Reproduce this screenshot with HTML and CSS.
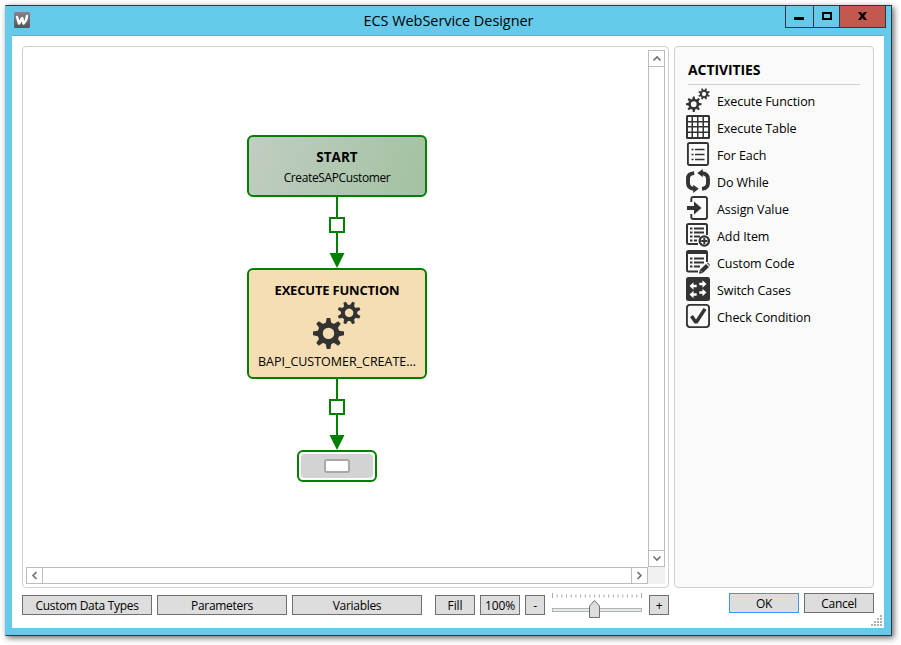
FILE: index.html
```
<!DOCTYPE html>
<html lang="en">
<head>
<meta charset="utf-8">
<title>ECS WebService Designer</title>
<link rel="stylesheet" href="styles.css">
</head>
<body>
<svg class="defs" width="0" height="0" aria-hidden="true">
  <defs>
    <path id="tooth" d="M-3-9.5L-1.8-15.5H1.8L3-9.5Z"/>
    <g id="gear">
      <circle r="8.3" fill="none" stroke="#333" stroke-width="5.2"/>
      <use href="#tooth"/><use href="#tooth" transform="rotate(45)"/><use href="#tooth" transform="rotate(90)"/><use href="#tooth" transform="rotate(135)"/>
      <use href="#tooth" transform="rotate(180)"/><use href="#tooth" transform="rotate(225)"/><use href="#tooth" transform="rotate(270)"/><use href="#tooth" transform="rotate(315)"/>
    </g>
    <symbol id="gears" viewBox="0 0 48 48">
      <g fill="#333"><use href="#gear" transform="translate(15.5 32.4)"/><use href="#gear" transform="translate(36.1 11.9) rotate(22.5) scale(.75)"/></g>
    </symbol>
    <path id="arrow" d="M0 0L-4-3.700V-1.200H-7.200V1.200H-4V3.700Z"/>
  </defs>
</svg>
<div class="window">
  <header class="titlebar">
    <svg class="logo" width="16" height="16" viewBox="0 0 16 16"><defs><linearGradient id="lg" x1="0" y1="0" x2="0" y2="1"><stop offset="0" stop-color="#858589"/><stop offset="1" stop-color="#555559"/></linearGradient></defs><rect width="16" height="16" rx="1.5" fill="url(#lg)"/><path d="M3 5L5 11.500L8.200 6L9.500 11.500Q12.500 9 13 4" fill="none" stroke="#fff" stroke-width="2.5" stroke-linejoin="round" stroke-linecap="round"/></svg>
    <h1>ECS WebService Designer</h1>
    <div class="caption">
      <span class="cap min"><svg width="27" height="20"><path d="M8 11h10v3H8z"/></svg></span>
      <span class="cap max"><svg width="25" height="20"><rect x="9" y="7" width="8" height="6" fill="none" stroke="#000" stroke-width="2"/></svg></span>
      <span class="cap close"><svg width="45" height="20"><path d="M18 6h3l1.500 2.300L24 6h3l-3 4 3 4h-3l-1.500-2.300L21 14h-3l3-4z"/></svg></span>
    </div>
  </header>
  <main class="client">
    <div class="panels">
      <section class="designer">
        <div class="flow">
          <div class="node start"><b>START</b><span>CreateSAPCustomer</span></div>
          <svg class="link" width="16" height="71" viewBox="0 0 16 71"><path d="M8 0V57" stroke="#008000" stroke-width="2"/><rect x="1" y="21" width="14" height="14" fill="#fff" stroke="#008000" stroke-width="2"/><path d="M.5 56h15L8 71z" fill="#008000"/></svg>
          <div class="node exec"><b>EXECUTE FUNCTION</b><svg width="48" height="48"><use href="#gears"/></svg><span>BAPI_CUSTOMER_CREATE...</span></div>
          <svg class="link" width="16" height="71" viewBox="0 0 16 71"><path d="M8 0V57" stroke="#008000" stroke-width="2"/><rect x="1" y="21" width="14" height="14" fill="#fff" stroke="#008000" stroke-width="2"/><path d="M.5 56h15L8 71z" fill="#008000"/></svg>
          <div class="node end"><div><i></i></div></div>
        </div>
        <div class="vbar"><span><svg width="15" height="15"><path d="M4.500 9.500L8 6L11.500 9.500"/></svg></span><span><svg width="15" height="15"><path d="M4.500 5.500L8 9L11.500 5.500"/></svg></span></div>
        <div class="hbar"><span><svg width="15" height="15"><path d="M9.500 4L6 7.500L9.500 11"/></svg></span><span><svg width="15" height="15"><path d="M5.500 4L9 7.500L5.500 11"/></svg></span></div>
        <div class="corner"></div>
      </section>
      <aside class="activities">
        <h2>ACTIVITIES</h2>
        <ul>
          <li><svg viewBox="0 0 48 48"><use href="#gears"/></svg><span>Execute Function</span></li>
          <li><svg viewBox="0 0 24 24"><rect width="24" height="24" rx="1.500" fill="#333"/><path fill="#fff" d="M2 2h3.500v4H2zM7 2h4v4H7zM12.500 2h4v4h-4zM18 2h4v4h-4zM2 7.500h3.500v3.500H2zM7 7.500h4v3.500H7zM12.500 7.500h4v3.500h-4zM18 7.500h4v3.500h-4zM2 12.500h3.500v4H2zM7 12.500h4v4H7zM12.500 12.500h4v4h-4zM18 12.500h4v4h-4zM2 18h3.500v4H2zM7 18h4v4H7zM12.500 18h4v4h-4zM18 18h4v4h-4z"/></svg><span>Execute Table</span></li>
          <li><svg viewBox="0 0 24 24" fill="none" stroke="#333" stroke-width="1.900"><rect x="1.900" y="1" width="20.200" height="22" rx="1.500"/><path d="M5.500 7.500h2M9 7.500h9.500M5.500 12.500h2M9 12.500h9.500M5.500 17.500h2M9 17.500h9.500" stroke-width="1.700"/></svg><span>For Each</span></li>
          <li><svg viewBox="0 0 24 24"><path d="M8.200 4.100Q2 4.500 2 9.500V14Q2 19.200 8 19.800M16 4.100Q22 4.800 22 10V14Q22 19.200 16 19.900" fill="none" stroke="#333" stroke-width="3.900"/><path d="M16.800 0V8.300L11.300 4.100zM7.200 15.700V24L12.700 19.800z" fill="#333"/></svg><span>Do While</span></li>
          <li><svg viewBox="0 0 24 24"><path d="M5.300 6V3Q5.300 1 7.300 1H19Q21 1 21 3V21Q21 23 19 23H7.300Q5.300 23 5.300 21V18" fill="none" stroke="#333" stroke-width="1.900"/><path d="M1 9.900h7V5.500l7.500 6.500L8 18.500v-4.400H1z" fill="#333"/></svg><span>Assign Value</span></li>
          <li><svg viewBox="0 0 24 24"><path d="M12 21H2.500Q1 21 1 19.500V2.500Q1 1 2.500 1H19.500Q21 1 21 2.500V12" fill="none" stroke="#333" stroke-width="2"/><path d="M4 5.500h2.500M8 5.500h10M4 9.500h2.500M8 9.500h10M4 13.500h2.500M8 13.500h6M4 17.500h2.500M8 17.500h3" stroke="#333" stroke-width="1.900"/><circle cx="18.300" cy="18" r="4.600" fill="#fafafa" stroke="#333" stroke-width="2.400"/><path d="M15.300 18h6M18.300 15v6" stroke="#333" stroke-width="2"/></svg><span>Add Item</span></li>
          <li><svg viewBox="0 0 24 24"><path d="M12 21.500H2.500Q1 21.500 1 20V2.500Q1 1 2.500 1H19.500Q21 1 21 2.500V12" fill="none" stroke="#333" stroke-width="2"/><path d="M1 1h20v3H1z" fill="#333"/><path d="M4 8.500h2.500M8 8.500h10M4 12.500h2.500M8 12.500h10M4 16.500h2.500M8 16.500h6" stroke="#333" stroke-width="1.800"/><path d="M13 23.700l.7-3.700L20 14l3 3-6.300 6z" fill="#333"/><path d="M20.800 13.200l1-1 3 3-1 1zM14.200 20.500l2 2" fill="#333" stroke="#fafafa" stroke-width=".6"/></svg><span>Custom Code</span></li>
          <li><svg viewBox="0 0 24 24"><rect width="24" height="24" rx="2.500" fill="#333"/><g fill="#fff"><use href="#arrow" transform="translate(3.500 9) scale(-1 1)"/><use href="#arrow" transform="translate(20.500 7)"/><use href="#arrow" transform="translate(3.500 17.500) scale(-1 1)"/><use href="#arrow" transform="translate(20.500 15.500)"/></g></svg><span>Switch Cases</span></li>
          <li><svg viewBox="0 0 24 24"><rect x=".9" y=".9" width="22.200" height="22.200" rx="3" fill="none" stroke="#333" stroke-width="1.900"/><path d="M4 13l3-2 3 4.500L17.500 4 20.500 5.700 11.500 19.500H8.500z" fill="#333"/></svg><span>Check Condition</span></li>
        </ul>
      </aside>
    </div>
    <footer class="bottom">
      <div class="tools">
        <button class="wide"><span>Custom Data Types</span></button><button class="wide"><span>Parameters</span></button><button class="wide"><span>Variables</span></button>
        <button class="mid first"><span>Fill</span></button><button class="mid"><span>100%</span></button><button class="tiny"><span>-</span></button>
        <svg class="slider" width="92" height="26" viewBox="0 0 92 26"><path d="M1.500 0V5M90.500 0V5" stroke="#aaa"/><path d="M6.190 1.500v3M10.870 1.500v3M15.550 1.500v3M20.240 1.500v3M24.920 1.500v3M29.600 1.500v3M34.300 1.500v3M39 1.500v3M43.650 1.500v3M48.340 1.500v3M53 1.500v3M57.700 1.500v3M62.400 1.500v3M67.100 1.500v3M71.800 1.500v3M76.450 1.500v3M81.130 1.500v3M85.820 1.500v3" stroke="#aaa"/><rect x="1.500" y="15.500" width="89" height="3" fill="#e7eaea" stroke="#b0b4b4"/><path d="M38.500 24.500V13L43.500 7.500L48.500 13V24.500z" fill="#ddd" stroke="#707070"/></svg>
        <button class="tiny"><span>+</span></button>
      </div>
      <div class="dialog"><button class="ok"><span>OK</span></button><button><span>Cancel</span></button></div>
    </footer>
    <svg class="grip" width="11" height="11"><path d="M9 0h2v2H9zM6 3h2v2H6zM9 3h2v2H9zM3 6h2v2H3zM6 6h2v2H6zM9 6h2v2H9zM0 9h2v2H0zM3 9h2v2H3zM6 9h2v2H6zM9 9h2v2H9z" fill="#b0b0b0"/></svg>
  </main>
</div>
</body>
</html>
```
FILE: styles.css
```
* { box-sizing: border-box; }
body {
  margin: 0;
  padding: 5px;
  width: 901px;
  height: 645px;
  overflow: hidden;
  background: #fff;
  color: #000;
  font: 12.5px/18px "Open Sans", "Noto Sans", sans-serif;
}
svg { display: block; flex: none; }
.defs { position: absolute; }
.window {
  width: 887px;
  height: 631px;
  background: #65c9ea;
  border: 1px solid #2b3a42;
  border-left-color: #65c9ea;
  box-shadow: 2px 2px 6px rgba(0, 0, 0, .6);
}
.titlebar {
  height: 29px;
  display: grid;
  grid-template-columns: 110px 1fr 110px;
  align-items: start;
}
.logo { margin: 6px 0 0 8px; }
.titlebar h1 {
  margin: 5px 0 0;
  text-align: center;
  font-size: 14.5px;
  line-height: 20px;
  font-weight: 400;
  letter-spacing: -.05px;
}
.caption { display: flex; width: 101px; margin-left: 4px; border: 1px solid #2b3a42; border-top: 0; }
.cap { height: 21px; border-left: 1px solid #2b3a42; }
.cap:first-child { border-left: 0; }
.cap.close { background: #c1594f; flex: 1; overflow: hidden; }
.client {
  position: relative;
  width: 872px;
  height: 593px;
  margin-left: 6px;
  padding: 10px;
  background: #fff;
  border-top: 1px solid #6fa9c5;
}
.panels { display: flex; gap: 5px; height: 542px; }
.designer, .activities { border: 1px solid #d0d0d0; border-radius: 4px; }
.designer {
  width: 647px;
  padding: 3px;
  display: grid;
  grid-template: 517px 17px / 622px 17px;
}
.flow { display: flex; flex-direction: column; align-items: center; padding-top: 85px; }
.node {
  width: 180px;
  border: 2px solid #008000;
  border-radius: 6px;
  display: flex;
  flex-direction: column;
  align-items: center;
}
.node b { font-size: 13px; line-height: 18px; letter-spacing: -.2px; }
.node span { font-size: 12px; line-height: 16px; }
.start { height: 62px; padding-top: 11px; background: linear-gradient(110deg, #c1cdc1, #a2c2a2); }
.start b { font-size: 13.5px; letter-spacing: 0; }
.start span { margin-top: 4px; letter-spacing: -.38px; }
.exec { height: 111px; padding-top: 11px; background: #f5deb3; }
.exec svg { margin-top: 2px; }
.exec span { margin-top: 5px; font-size: 12.5px; letter-spacing: -.02px; }
.node.end { width: 80px; height: 32px; padding: 2px; }
.end div { width: 72px; height: 24px; border-radius: 4px; background: #d3d3d3; display: grid; place-items: center; }
.end i { width: 26px; height: 14px; border: 2px solid #a9a9a9; border-radius: 3px; background: #fff; }
.vbar, .hbar { display: flex; justify-content: space-between; border: 1px solid #bcbcbc; }
.vbar { flex-direction: column; }
.vbar span:first-child { border-bottom: 1px solid #bcbcbc; }
.vbar span:last-child { border-top: 1px solid #bcbcbc; }
.hbar span:first-child { border-right: 1px solid #bcbcbc; }
.hbar span:last-child { border-left: 1px solid #bcbcbc; }
.vbar path, .hbar path { fill: none; stroke: #707070; stroke-width: 1.6; }
.corner { background: #f0f0f0; }
.activities { width: 200px; padding: 13px 13px 0 11px; background: #fafafa; }
.activities h2 {
  margin: 0 0 0 2px;
  height: 25px;
  border-bottom: 1px solid #d0d0d0;
  font-size: 14px;
  line-height: 20px;
  letter-spacing: -.1px;
}
.activities ul { margin: 2px 0 0; padding: 0; list-style: none; }
.activities li { height: 27px; display: flex; align-items: flex-start; gap: 7px; }
.activities li svg { width: 24px; height: 24px; margin-top: 1px; }
.activities li span { padding-top: 6px; line-height: 18px; white-space: nowrap; letter-spacing: -.08px; }
.bottom { display: flex; justify-content: space-between; height: 30px; padding-top: 5px; }
.tools { display: flex; gap: 5px; padding-top: 2px; }
button {
  height: 20px;
  width: 70px;
  padding: 0;
  border: 1px solid #707070;
  border-radius: 0;
  background: #ddd;
  color: #000;
  font: 12px/18px "Open Sans", "Noto Sans", sans-serif;
  letter-spacing: -.3px;
}
button span { display: block; position: relative; top: 1px; white-space: nowrap; }
.wide { width: 130px; }
.mid { width: 40px; letter-spacing: -.1px; }
.mid.first { margin-left: 8px; }
.tiny { width: 20px; }
.slider { margin: -2px 1px 0 1px; }
.dialog { display: flex; gap: 5px; }
.ok { border-color: #3399ff; }
.grip { position: absolute; right: 2px; bottom: 2px; }
```
